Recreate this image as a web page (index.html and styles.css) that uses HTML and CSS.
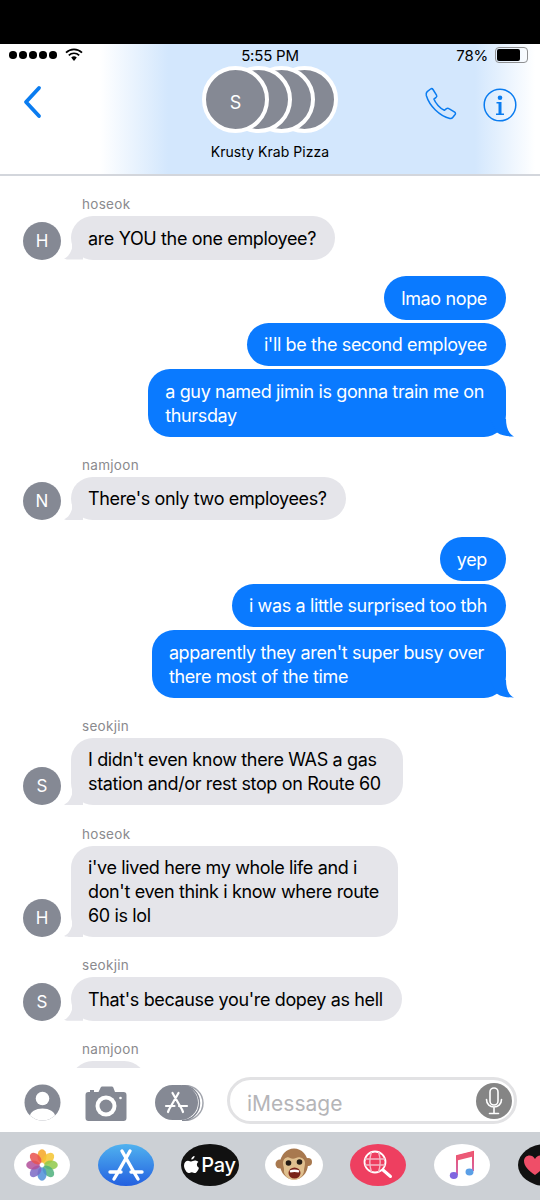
FILE: index.html
```html
<!DOCTYPE html>
<html lang="en">
<head>
<meta charset="utf-8">
<title>Krusty Krab Pizza</title>
<link rel="stylesheet" href="styles.css">
</head>
<body>
<div class="phone">
  <div class="topbar"></div>
  <header class="header">
    <div class="status">
      <div class="status-left">
        <span class="dots"><i></i><i></i><i></i><i></i><i></i></span>
        <svg class="wifi" width="18" height="14" viewBox="0 0 18 14"><path d="M1 4.600a11.400 11.400 0 0 1 16 0" fill="none" stroke="#000" stroke-width="1.700"/><path d="M3.800 7.400a7.400 7.400 0 0 1 10.400 0" fill="none" stroke="#000" stroke-width="1.700"/><path d="M6.200 9.600a4 4 0 0 1 5.600 0L9 13z" fill="#000"/></svg>
      </div>
      <div class="time">5:55 PM</div>
      <div class="status-right">
        <span>78%</span>
        <span class="battery"><i></i></span>
      </div>
    </div>
    <div class="nav">
      <svg class="back" width="20" height="34" viewBox="0 0 20 34"><path d="M17 3 4 17l13 14" fill="none" stroke="#0a7cf0" stroke-width="3.800" stroke-linecap="round" stroke-linejoin="round"/></svg>
      <div class="group">
        <div class="stack">
          <span class="ring">S</span><span class="ring"></span><span class="ring"></span><span class="ring"></span>
        </div>
        <div class="group-name">Krusty Krab Pizza</div>
      </div>
      <div class="actions">
        <svg width="35" height="35" viewBox="0 0 35 35"><path d="M3.200 4.600 6.600 2c.9-.6 1.800-.4 2.400.5l3.500 5.600c.5.8.3 1.600-.4 2.200l-2.200 1.800c1.200 3.600 6.400 9.700 10.400 11.200l2.200-1.700c.8-.6 1.600-.6 2.400 0l5.800 3.600c.9.600 1 1.500.4 2.300l-2.400 3c-.7.900-1.600 1.300-2.800 1C15.500 29 5.500 19 2.300 8.500c-.4-1.600 0-3 .9-3.900z" fill="none" stroke="#0a7cf0" stroke-width="1.500" stroke-linejoin="round"/></svg>
        <svg width="34" height="34" viewBox="0 0 34 34"><circle cx="17" cy="17" r="15.800" fill="none" stroke="#0a7cf0" stroke-width="1.500"/><circle cx="17" cy="9.800" r="2.300" fill="#0a7cf0"/><path d="M13.500 14h5v11.500h2.500v1.500h-8v-1.500h2.500V15.500h-2z" fill="#0a7cf0"/></svg>
      </div>
    </div>
  </header>

  <main class="messages">
    <div class="thread in first">
      <div class="who">hoseok</div>
      <div class="row"><span class="avatar">H</span><div class="bubble">are YOU the one employee?</div></div>
    </div>
    <div class="thread out gap-s">
      <div class="bubble plain">lmao nope</div>
      <div class="bubble plain">i'll be the second employee</div>
      <div class="bubble wrap">a guy named jimin is gonna train me on<br>thursday</div>
    </div>
    <div class="thread in gap-l">
      <div class="who">namjoon</div>
      <div class="row"><span class="avatar">N</span><div class="bubble">There's only two employees?</div></div>
    </div>
    <div class="thread out gap-s">
      <div class="bubble plain">yep</div>
      <div class="bubble plain">i was a little surprised too tbh</div>
      <div class="bubble wrap">apparently they aren't super busy over<br>there most of the time</div>
    </div>
    <div class="thread in gap-l">
      <div class="who">seokjin</div>
      <div class="row"><span class="avatar">S</span><div class="bubble wrap">I didn't even know there WAS a gas<br>station and/or rest stop on Route 60</div></div>
    </div>
    <div class="thread in gap-l">
      <div class="who">hoseok</div>
      <div class="row"><span class="avatar">H</span><div class="bubble">i've lived here my whole life and i<br>don't even think i know where route<br>60 is lol</div></div>
    </div>
    <div class="thread in gap-l">
      <div class="who">seokjin</div>
      <div class="row"><span class="avatar">S</span><div class="bubble">That's because you're dopey as hell</div></div>
    </div>
    <div class="thread in gap-l">
      <div class="who">namjoon</div>
      <div class="row"><span class="avatar hidden"></span><div class="bubble typing"></div></div>
    </div>
  </main>

  <div class="composer">
    <svg width="37" height="37" viewBox="0 0 37 37"><defs><clipPath id="pc"><circle cx="18.500" cy="18.500" r="18"/></clipPath></defs><circle cx="18.500" cy="18.500" r="18" fill="#858994"/><g clip-path="url(#pc)" fill="#fff"><circle cx="18.500" cy="14.500" r="6.800"/><ellipse cx="18.500" cy="32" rx="12.500" ry="7.500"/></g></svg>
    <svg class="camera" width="42" height="35" viewBox="0 0 42 35"><path d="M4 6h1V4h4v2h4.500l2.200-4.500c.4-.8 1-1 1.800-1h9c.8 0 1.400.2 1.800 1L30 6h8.500C40.500 6 41.500 7 41.500 9v23c0 2-1 3-3 3H3.500c-2 0-3-1-3-3V9c0-2 1-3 3-3z" fill="#858994"/><circle cx="21" cy="20" r="10.500" fill="#fff"/><circle cx="21" cy="20" r="6.500" fill="#858994"/><circle cx="35.500" cy="12" r="1.300" fill="#fff"/></svg>
    <svg class="apps" width="49" height="36" viewBox="0 0 49 36"><path d="M30 .5c9.500 0 18 7.500 18 17.500s-8.500 17.500-18 17.500" fill="#fff" stroke="#a2a5ad" stroke-width="1.500"/><path d="M27 .5c9.500 0 17.500 7.500 17.500 17.500S36.500 35.500 27 35.500" fill="#fff" stroke="#858994" stroke-width="1.500"/><rect x="0" y="0" width="43" height="35" rx="17.500" fill="#858994"/><path d="M23.500 8 14 24.500M17.500 8 27 24.500M11 21h8.500M24 21h8M13 27l1-2.500M28 27l-1-2.500" fill="none" stroke="#fff" stroke-width="2.200" stroke-linecap="round"/></svg>
    <div class="input">
      <span class="placeholder">iMessage</span>
      <span class="mic"><svg width="20" height="28" viewBox="0 0 20 28"><rect x="6" y="1" width="8" height="17" rx="4" fill="none" stroke="#fff" stroke-width="1.600"/><path d="M2.500 12.500c0 10 15 10 15 0M10 20v6M5.500 26.500h9" fill="none" stroke="#fff" stroke-width="1.600" stroke-linecap="round"/></svg></span>
    </div>
  </div>

  <nav class="tray">
    <span class="pill white"><svg width="32" height="32" viewBox="-16 -16 32 32"><g fill-opacity=".85"><ellipse cx="0" cy="-9" rx="4.600" ry="6.800" fill="#f6a623"/><ellipse cx="0" cy="-9" rx="4.600" ry="6.800" fill="#f4c430" transform="rotate(45)"/><ellipse cx="0" cy="-9" rx="4.600" ry="6.800" fill="#8fc94a" transform="rotate(90)"/><ellipse cx="0" cy="-9" rx="4.600" ry="6.800" fill="#4fb07c" transform="rotate(135)"/><ellipse cx="0" cy="-9" rx="4.600" ry="6.800" fill="#4d8ed8" transform="rotate(180)"/><ellipse cx="0" cy="-9" rx="4.600" ry="6.800" fill="#7a69c4" transform="rotate(225)"/><ellipse cx="0" cy="-9" rx="4.600" ry="6.800" fill="#b24f9a" transform="rotate(270)"/><ellipse cx="0" cy="-9" rx="4.600" ry="6.800" fill="#e9524d" transform="rotate(315)"/></g></svg></span>
    <span class="pill store"><svg width="38" height="36" viewBox="0 0 38 36"><path d="M23 4 10 27M15 4l13 23M3 25h11M24 25h11M7 32l3-5M31 32l-3-5" fill="none" stroke="#fff" stroke-width="3.400" stroke-linecap="round"/></svg></span>
    <span class="pill pay"><svg width="15" height="18" viewBox="0 0 15 18"><path d="M10.600 0c.1 1.600-1.300 3.600-3.300 3.500C7.100 1.800 8.800.1 10.600 0zM14.400 6c-2.200 1.300-1.900 4.700.6 5.700-.6 1.900-2.200 5.300-4.100 5.300-1.200 0-1.700-.8-3.100-.8s-2 .8-3.100.8C2.500 17 0 12.700 0 9.600c0-3.200 2-4.900 4-4.900 1.300 0 2.400.9 3.300.9.800 0 2.100-1 3.600-1 1.400 0 2.700.6 3.500 1.400z" fill="#fff"/></svg><b>Pay</b></span>
    <span class="pill white monkey"><svg width="38" height="38" viewBox="0 0 38 38"><circle cx="5" cy="18" r="4.500" fill="#a8794f"/><circle cx="33" cy="16" r="4" fill="#a8794f"/><ellipse cx="19" cy="18" rx="14" ry="15.500" fill="#a8794f"/><path d="M8 17c0-5 5-7 7-5 2 1 4 1 6 0 3-2 9 0 9 5 0 3-1 5-1 7 0 6-5 10-10 10S8 29 9 24c0-3-1-4-1-7z" fill="#e0c08f"/><circle cx="13.500" cy="17" r="2.800" fill="#221a14"/><circle cx="24.500" cy="16" r="2.800" fill="#221a14"/><ellipse cx="19.500" cy="27" rx="6" ry="5.500" fill="#7a2418"/><path d="M14.500 24.500c3-1.200 7-1.200 10 0l-.8 2c-3-.8-5.400-.8-8.400 0z" fill="#fff"/></svg></span>
    <span class="pill red"><svg width="32" height="32" viewBox="0 0 32 32"><circle cx="13" cy="13" r="10.500" fill="none" stroke="#fff" stroke-width="1.800"/><path d="M3 10h20M3 16h20M9.500 3c-2 6-2 14 0 20M16.500 3c2 6 2 14 0 20" fill="none" stroke="#f4b9c6" stroke-width="1.400"/><path d="m21 21 7.500 6.500" stroke="#fff" stroke-width="3" stroke-linecap="round"/></svg></span>
    <span class="pill white"><svg width="26" height="30" viewBox="0 0 26 30"><defs><linearGradient id="mg" x1="0" y1="0" x2="0" y2="1"><stop offset="0" stop-color="#ef4e68"/><stop offset="1" stop-color="#d06ab0"/></linearGradient></defs><path d="M8 25V6L24 2v19" fill="none" stroke="url(#mg)" stroke-width="2"/><path d="M8 5.500 24 1.500v5L8 10.500z" fill="#ec5a77"/><ellipse cx="4.800" cy="25.500" rx="4" ry="3.400" fill="#8067e0"/><ellipse cx="20.500" cy="22" rx="4" ry="3.400" fill="#5b9fe6"/></svg></span>
    <span class="pill dark"><svg width="24" height="22" viewBox="0 0 24 22"><path d="M12 21C5 16 1 12 1 7c0-6 8-8 11-2 3-6 11-4 11 2 0 5-4 9-11 14z" fill="#ef4e68"/></svg></span>
  </nav>
</div>
</body>
</html>
```

FILE: styles.css
```css
* { box-sizing: border-box; }
html, body { margin: 0; padding: 0; background: #fff; }
body { font-family: Inter, "Liberation Sans", sans-serif; color: #000; }
.phone { width: 540px; height: 1200px; display: flex; flex-direction: column; overflow: hidden; }
.topbar { height: 44px; background: #000; flex: none; }

.header {
  height: 132px; flex: none;
  border-bottom: 2px solid #d3d6dc;
  background: linear-gradient(90deg, #fff 0, #fff 100px, #d3e7fd 168px, #d3e7fd 475px, #fff 535px);
}
.status { height: 22px; display: grid; grid-template-columns: 1fr auto 1fr; align-items: center; font-size: 15px; letter-spacing: -.2px; }
.status-left { display: flex; align-items: center; gap: 8px; padding-left: 9px; }
.dots { display: flex; gap: 2.500px; }
.dots i { width: 7.500px; height: 7.500px; border-radius: 50%; background: #000; display: block; }
.status-right { display: flex; justify-content: flex-end; align-items: center; gap: 7px; padding-right: 12px; }
.battery { width: 33px; height: 16px; border: 1.500px solid #8f9092; border-radius: 4px; padding: 1px; display: block; }
.battery i { display: block; width: 78%; height: 100%; background: #000; border-radius: 2px; }

.nav { display: grid; grid-template-columns: 1fr auto 1fr; align-items: start; }
.back { margin: 19px 0 0 22px; }
.group { display: flex; flex-direction: column; align-items: center; }
.stack { display: flex; height: 67px; }
.ring {
  width: 67px; height: 67px; border-radius: 50%; background: #858994; border: 4px solid #fff;
  margin-left: -44px; display: flex; align-items: center; justify-content: center; flex: none;
  color: #fff; font-size: 18px; padding-top: 6px;
}
.ring:nth-child(1) { margin-left: 0; z-index: 4; }
.ring:nth-child(2) { z-index: 3; }
.ring:nth-child(3) { z-index: 2; }
.ring:nth-child(4) { z-index: 1; }
.group-name { font-size: 14px; letter-spacing: .05px; margin-top: 10px; line-height: 17px; }
.actions { display: flex; justify-content: flex-end; align-items: center; gap: 24px; padding: 21px 23px 0 0; }

.messages { flex: 1; min-height: 0; overflow: hidden; display: flex; flex-direction: column; padding: 0 34px 0 23px; }
.thread { display: flex; flex-direction: column; flex: none; }
.thread.first { margin-top: 20px; }
.thread.gap-s { margin-top: 16.500px; }
.thread.gap-s ~ .gap-s { margin-top: 17px; }
.thread.gap-l { margin-top: 20.200px; }
.thread.out { align-items: flex-end; gap: 3px; }
.who { font-size: 13.500px; line-height: 16px; color: #8a8a8e; letter-spacing: .3px; margin: 0 0 4px 59px; }
.row { display: flex; align-items: flex-end; gap: 10px; }
.avatar {
  width: 38px; height: 38px; border-radius: 50%; background: #858994; color: #fff;
  font-size: 17px; display: flex; align-items: center; justify-content: center; flex: none;
}
.avatar.hidden { visibility: hidden; }
.bubble {
  position: relative; font-size: 18px; line-height: 24px; padding: 10.500px 19px 9px 17px; border-radius: 22px;
  letter-spacing: -.36px; background: #e5e5ea; white-space: nowrap;
}
.bubble.wrap { padding-right: 22px; }
.in .bubble::after {
  content: ""; position: absolute; left: -8px; bottom: 0; width: 20px; height: 18px; background: #e5e5ea;
  clip-path: path("M20 0V18H12C8 18 4 18.500 1 17C4 16 7 13 9 7L9 0Z");
}
.out .bubble { background: #0a7aff; color: #fff; }
.out .bubble:not(.plain)::after {
  content: ""; position: absolute; right: -8px; bottom: 0; width: 24px; height: 18px; background: #0a7aff;
  clip-path: path("M0 0H16C16 8 18 15 24 18C20 18 12 17.500 7 14L0 0Z");
}
.typing { width: 75px; height: 43px; }

.composer {
  height: 64px; flex: none; background: #fff; display: flex; align-items: flex-start; padding: 16px 23px 0 24px;
}
.camera { margin: 2px 0 0 24px; }
.apps { margin: 1px 0 0 28px; }
.input {
  margin: -7px 0 0 23px; flex: 1; height: 47px; border: 3px solid #e2e2e4; border-radius: 24px;
  display: flex; align-items: center; justify-content: space-between; padding: 0 2px 0 17px;
  font-size: 21px; color: #b5b5b8;
}
.placeholder { padding-top: 5px; }
.mic { width: 36px; height: 36px; border-radius: 50%; background: #858585; display: flex; align-items: center; justify-content: center; }

.tray { height: 68px; flex: none; background: #ccd0d5; display: flex; gap: 28px; padding: 12px 0 0 14px; align-items: flex-start; overflow: hidden; }
.pill { width: 56px; height: 42px; border-radius: 50%; display: flex; align-items: center; justify-content: center; flex: none; overflow: hidden; }
.white { background: #fff; }
.store { background: linear-gradient(#50b2ef, #2360e0); }
.pay { background: #111; color: #fff; width: 58px; gap: 2px; margin-left: -1px; }
.pay b { font-weight: 500; font-size: 20px; letter-spacing: -.3px; }
.monkey { width: 58px; margin-left: -2px; }
.red { background: #ee3f60; margin-left: -1px; }
.dark { background: #111; justify-content: flex-start; padding-left: 5px; }
```
